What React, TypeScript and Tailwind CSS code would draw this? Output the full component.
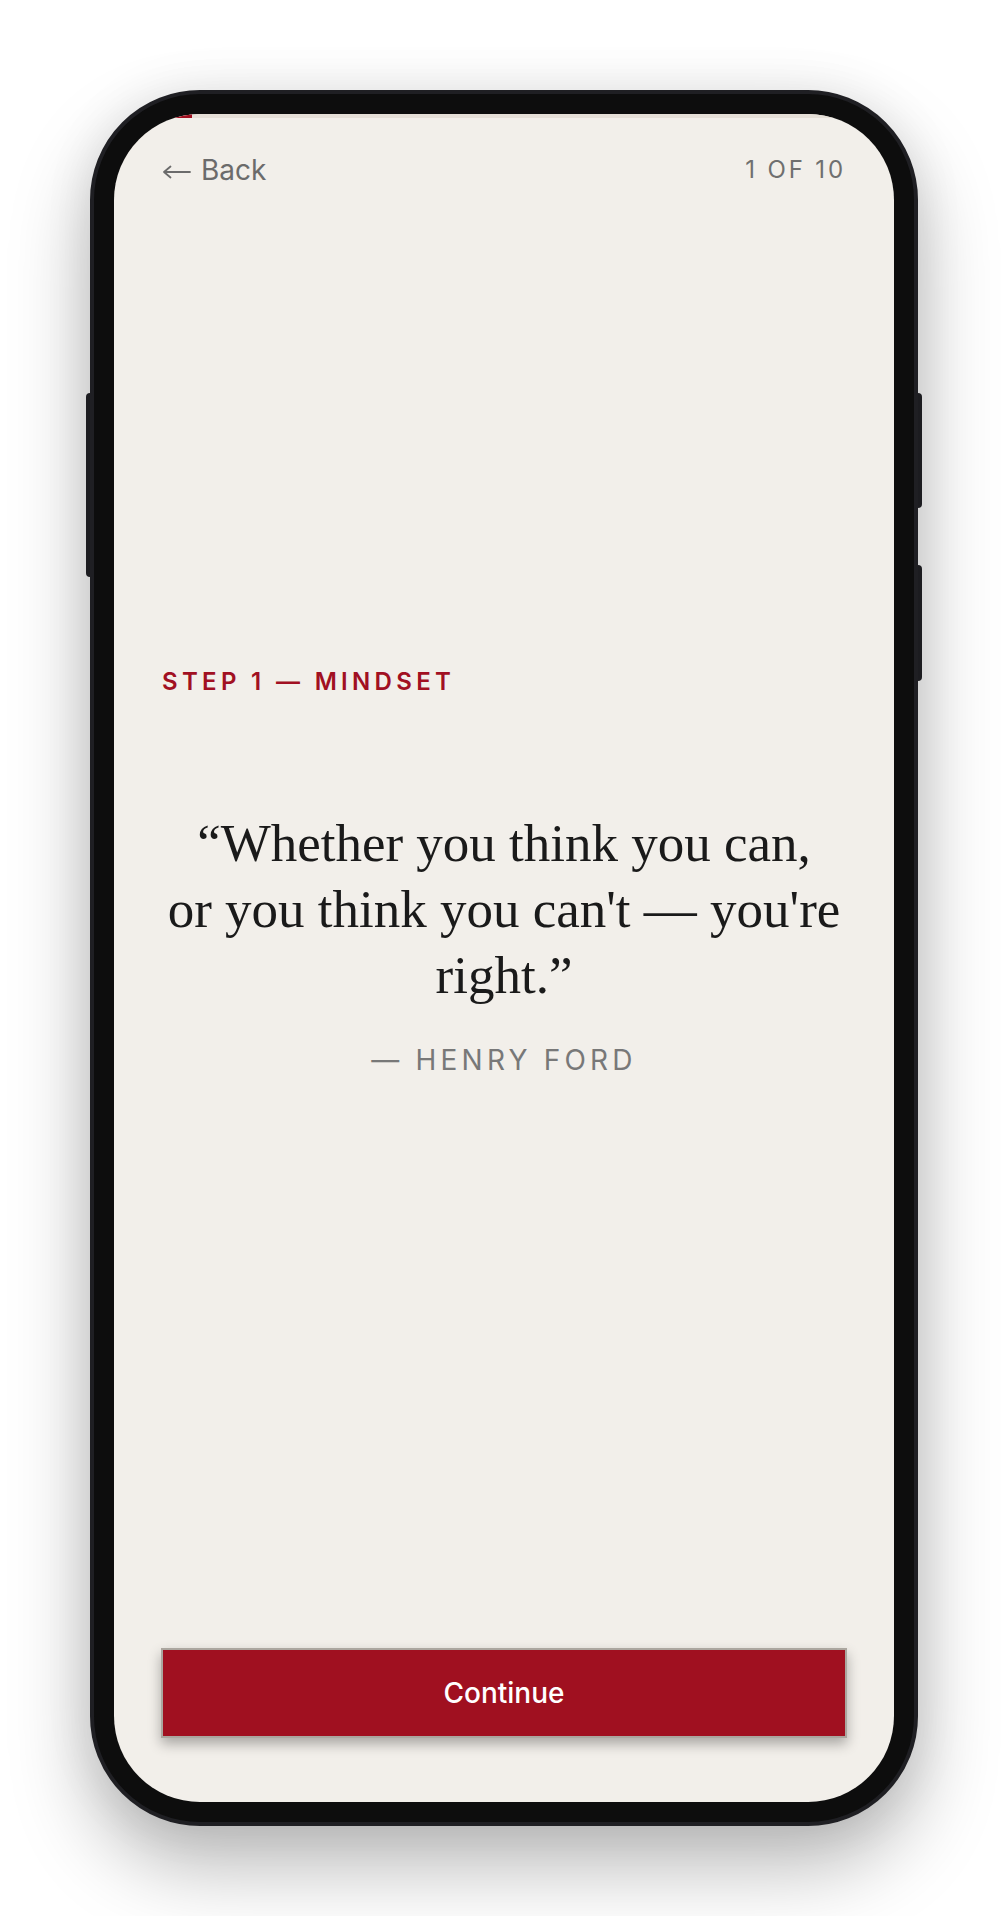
import React from "react";

const sans = { fontFamily: "Inter, 'Noto Sans', sans-serif" };
const serif = { fontFamily: "'Liberation Serif', 'Times New Roman', serif" };

function BackArrow() {
  return (
    <svg width="29" height="14" viewBox="0 0 29 14" fill="none" className="mt-[3px]">
      <path d="M28 7H2M8.5 1.5L2 7l6.5 5.5" stroke="currentColor" strokeWidth="1.8" strokeLinecap="round" strokeLinejoin="round" />
    </svg>
  );
}

export default function App() {
  const step = 1;
  const total = 10;

  return (
    <div className="min-h-screen w-full bg-white flex items-center justify-center" style={sans}>
      {/* Phone frame */}
      <div className="relative w-[828px] h-[1736px] rounded-[110px] bg-[#0d0d0d] border-[4px] border-[#1f1f23] p-[20px] shadow-[0_40px_80px_rgba(0,0,0,0.28),0_0_50px_rgba(0,0,0,0.08)]">
        {/* side buttons */}
        <div className="absolute left-[-8px] top-[299px] w-[4px] h-[184px] rounded-l-[4px] bg-[#1c1c20]" />
        <div className="absolute right-[-8px] top-[299px] w-[4px] h-[115px] rounded-r-[4px] bg-[#1c1c20]" />
        <div className="absolute right-[-8px] top-[471px] w-[4px] h-[116px] rounded-r-[4px] bg-[#1c1c20]" />

        {/* Screen */}
        <div className="w-full h-full rounded-[86px] overflow-hidden bg-[#f2efea] flex flex-col">
          {/* Progress */}
          <div className="h-[4px] w-full bg-[#e5dfd7] shrink-0">
            <div className="h-full bg-[#a01020]" style={{ width: `${(step / total) * 100}%` }} />
          </div>

          {/* Header */}
          <div className="mt-[31px] px-[48px] flex items-center justify-between h-[42px] shrink-0">
            <button className="text-[28px] leading-[42px] text-[#6b6b6b] flex items-center">
              <BackArrow />
              <span className="ml-[10px]">Back</span>
            </button>
            <span className="text-[24px] leading-[42px] tracking-[0.12em] text-[#6f6f6f]">
              {step} OF {total}
            </span>
          </div>

          {/* Content */}
          <div className="flex-1 flex flex-col justify-center px-[48px] pb-[94px]">
            <div className="text-[24px] leading-[32px] font-semibold tracking-[0.18em] text-[#a11022] mb-[112px]">
              STEP 1 — MINDSET
            </div>
            <blockquote className="text-center text-[53px] leading-[66px] text-[#1a1a1a]" style={serif}>
              “Whether you think you can,
              <br />
              or you think you can't — you're
              <br />
              right.”
            </blockquote>
            <div className="mt-[32px] text-center text-[28px] leading-[40px] tracking-[0.15em] text-[#787878]">
              — HENRY FORD
            </div>
          </div>

          {/* Footer */}
          <div className="px-[47px] pb-[64px] shrink-0">
            <button className="w-full h-[90px] bg-[#a01020] border-2 border-[#aba69f] text-white text-[28px] font-medium shadow-[0_6px_12px_rgba(0,0,0,0.3)]">
              Continue
            </button>
          </div>
        </div>
      </div>
    </div>
  );
}
